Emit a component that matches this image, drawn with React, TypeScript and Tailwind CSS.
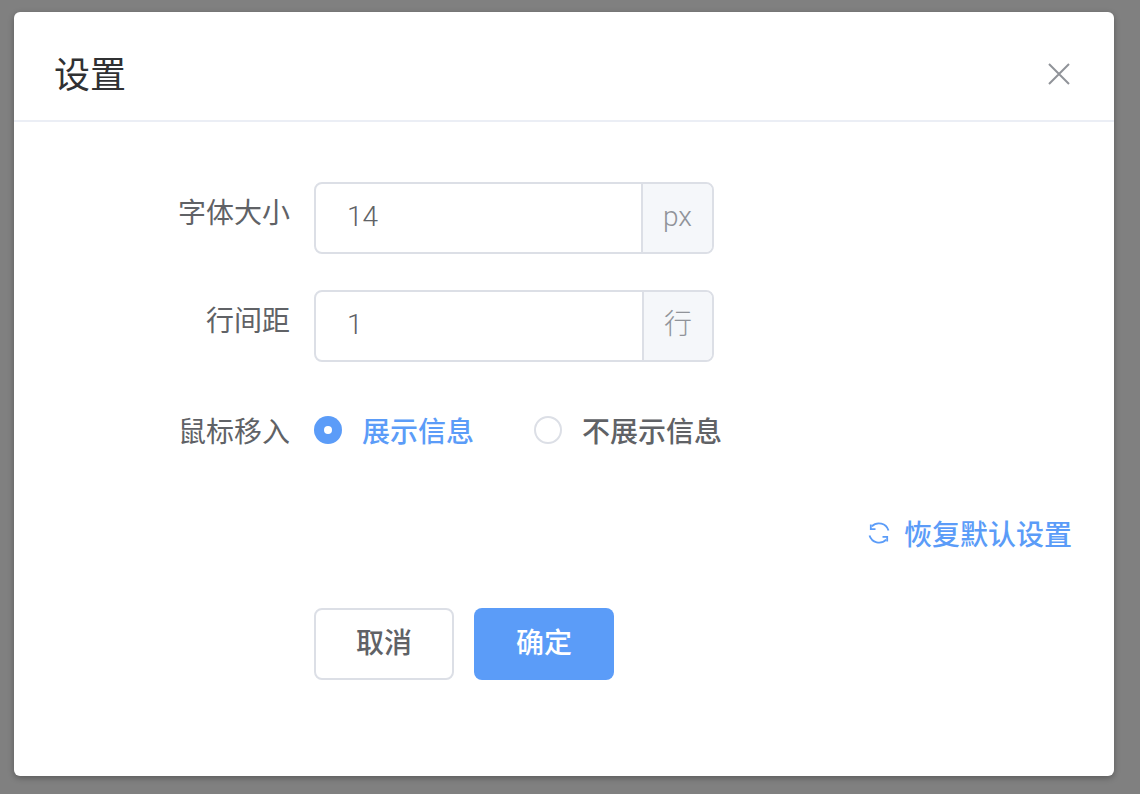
const font = { fontFamily: '"Noto Sans CJK SC", sans-serif' };
const latin = { fontFamily: 'Roboto, "Noto Sans CJK SC", sans-serif' };

function RestoreIcon() {
  return (
    <svg width="22" height="22" viewBox="0 0 22 22" fill="none" stroke="currentColor" strokeWidth="1.8">
      <path d="M20.5 8.5A10 10 0 0 0 3.8 4.4" />
      <path d="M1.5 13.5A10 10 0 0 0 18.2 17.6" />
      <path d="M2.8 2.5V7.2H7.5" />
      <path d="M19.2 19.5V14.8H14.5" />
    </svg>
  );
}

function NumberRow({ label, value, unit }: { label: string; value: string; unit: string }) {
  return (
    <div className="flex items-start">
      <label className="w-[276px] pt-[7px] text-right text-[28px] leading-[44px] text-[#606266]">{label}</label>
      <div style={latin} className="ml-6 flex h-[72px] w-[400px] rounded-lg border-2 border-[#dcdfe6]">
        <div className="flex-1 pl-[31px] text-[28px] font-light leading-[66px] text-[#606266]">{value}</div>
        <div className="rounded-r-md border-l-2 border-[#dcdfe6] bg-[#f5f7fa] px-5 text-[28px] font-light leading-[66px] text-[#909399]">{unit}</div>
      </div>
    </div>
  );
}

function Radio({ checked, label }: { checked?: boolean; label: string }) {
  return (
    <div className={`flex items-center gap-5 text-[28px] font-medium leading-[40px] ${checked ? "text-[#5b9cf8]" : "text-[#606266]"}`}>
      {checked ? (
        <span className="flex h-7 w-7 items-center justify-center rounded-full bg-[#5b9cf8]">
          <span className="h-2 w-2 rounded-full bg-white" />
        </span>
      ) : (
        <span className="h-7 w-7 rounded-full border-2 border-[#dcdfe6] bg-white" />
      )}
      <span>{label}</span>
    </div>
  );
}

export default function App() {
  return (
    <div style={font} className="h-[794px] w-[1140px] overflow-hidden bg-[#808080] pl-[14px] pt-3">
      <div className="h-[764px] w-[1100px] rounded-md bg-white shadow-[0_2px_6px_rgba(0,0,0,0.3)]">
        <div className="flex h-[110px] items-center justify-between border-b-2 border-[#ebeef5] pl-[40px] pr-[44px] pt-3">
          <h1 className="text-[36px] font-normal leading-[48px] text-[#303133]">设置</h1>
          <svg className="mt-1" width="22" height="22" viewBox="0 0 22 22" fill="none" stroke="#909399" strokeWidth="2">
            <path d="M1 1l20 20M21 1L1 21" />
          </svg>
        </div>

        <div className="pt-[60px]">
          <div className="flex flex-col gap-9">
            <NumberRow label="字体大小" value="14" unit="px" />
            <NumberRow label="行间距" value="1" unit="行" />
          </div>

          <div className="mt-12 flex items-center">
            <label className="w-[276px] text-right text-[28px] leading-[40px] text-[#606266]">鼠标移入</label>
            <div className="ml-6 flex gap-[60px]">
              <Radio checked label="展示信息" />
              <Radio label="不展示信息" />
            </div>
          </div>

          <div className="mt-[63px] flex items-center justify-end gap-[14px] pr-[42px] text-[28px] font-medium leading-[40px] text-[#5b9cf8]">
            <RestoreIcon />
            <span>恢复默认设置</span>
          </div>

          <div className="ml-[300px] mt-[55px] flex gap-5">
            <button className="h-[72px] w-[140px] rounded-lg border-2 border-[#dcdfe6] bg-white pb-[6px] text-[28px] font-medium text-[#606266]">取消</button>
            <button className="h-[72px] w-[140px] rounded-lg bg-[#5b9cf8] pb-[6px] text-[28px] font-medium text-white">确定</button>
          </div>
        </div>
      </div>
    </div>
  );
}
